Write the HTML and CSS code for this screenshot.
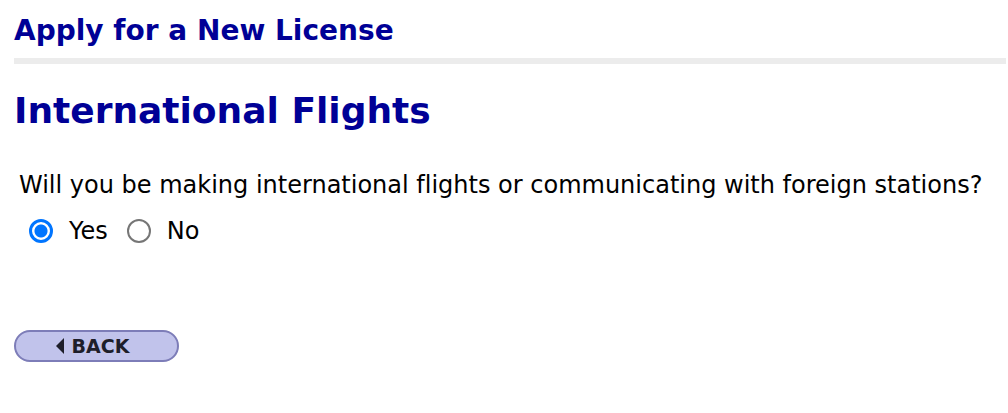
FILE: index.html
```html
<!DOCTYPE html>
<html lang="en">
<head>
<meta charset="utf-8">
<title>Apply for a New License</title>
<link rel="stylesheet" href="styles.css">
</head>
<body>
<div class="page">
  <h1 class="title">Apply for a New License</h1>
  <div class="rule"></div>
  <h2 class="section">International Flights</h2>
  <form class="question">
    <p class="prompt">Will you be making international flights or communicating with foreign stations?</p>
    <div class="options">
      <label class="option"><input type="radio" name="intl" checked> Yes</label>
      <label class="option"><input type="radio" name="intl"> No</label>
    </div>
  </form>
  <button class="back" type="button"><span class="arrow"></span>BACK</button>
</div>
</body>
</html>
```

FILE: styles.css
```css
html, body {
  margin: 0;
  padding: 0;
  background: #fff;
}
.page {
  padding: 0 2px 0 14px;
  font-family: "DejaVu Sans", Verdana, sans-serif;
  font-variant-ligatures: none;
}
.title {
  margin: 0;
  padding-top: 12px;
  font-size: 28px;
  line-height: 38px;
  font-weight: bold;
  color: #000096;
}
.rule {
  margin-top: 8px;
  height: 6px;
  background: #ececec;
}
.section {
  margin: 24px 0 0;
  font-size: 36px;
  line-height: 46px;
  font-weight: bold;
  color: #000096;
}
.question {
  margin: 36px 0 0 5px;
}
.prompt {
  margin: 0;
  font-size: 24px;
  line-height: 30px;
  color: #000;
}
.options {
  display: flex;
  gap: 19px;
  margin-top: 16px;
  margin-left: 10px;
}
.option {
  display: flex;
  align-items: center;
  gap: 16px;
  font-size: 24px;
  line-height: 30px;
  color: #000;
}
.option input {
  appearance: none;
  -webkit-appearance: none;
  box-sizing: border-box;
  margin: 0;
  width: 24px;
  height: 24px;
  border: 2.5px solid #767676;
  border-radius: 50%;
  background: #fff;
}
.option input:checked {
  border: 3px solid #0075ff;
  background: radial-gradient(circle, #0075ff 0 6px, #fff 7px);
}
.back {
  margin-top: 84px;
  display: flex;
  align-items: center;
  justify-content: center;
  gap: 8px;
  width: 165px;
  height: 32px;
  border: 2px solid #7d7db8;
  border-radius: 16px;
  background: #c1c3eb;
  font-family: "DejaVu Sans", sans-serif;
  font-weight: bold;
  font-size: 19px;
  color: #1e1e2a;
  padding: 0 8px 0 0;
}
.arrow {
  width: 0;
  height: 0;
  border-top: 8px solid transparent;
  border-bottom: 8px solid transparent;
  border-right: 8px solid #1e1e2a;
}
```
